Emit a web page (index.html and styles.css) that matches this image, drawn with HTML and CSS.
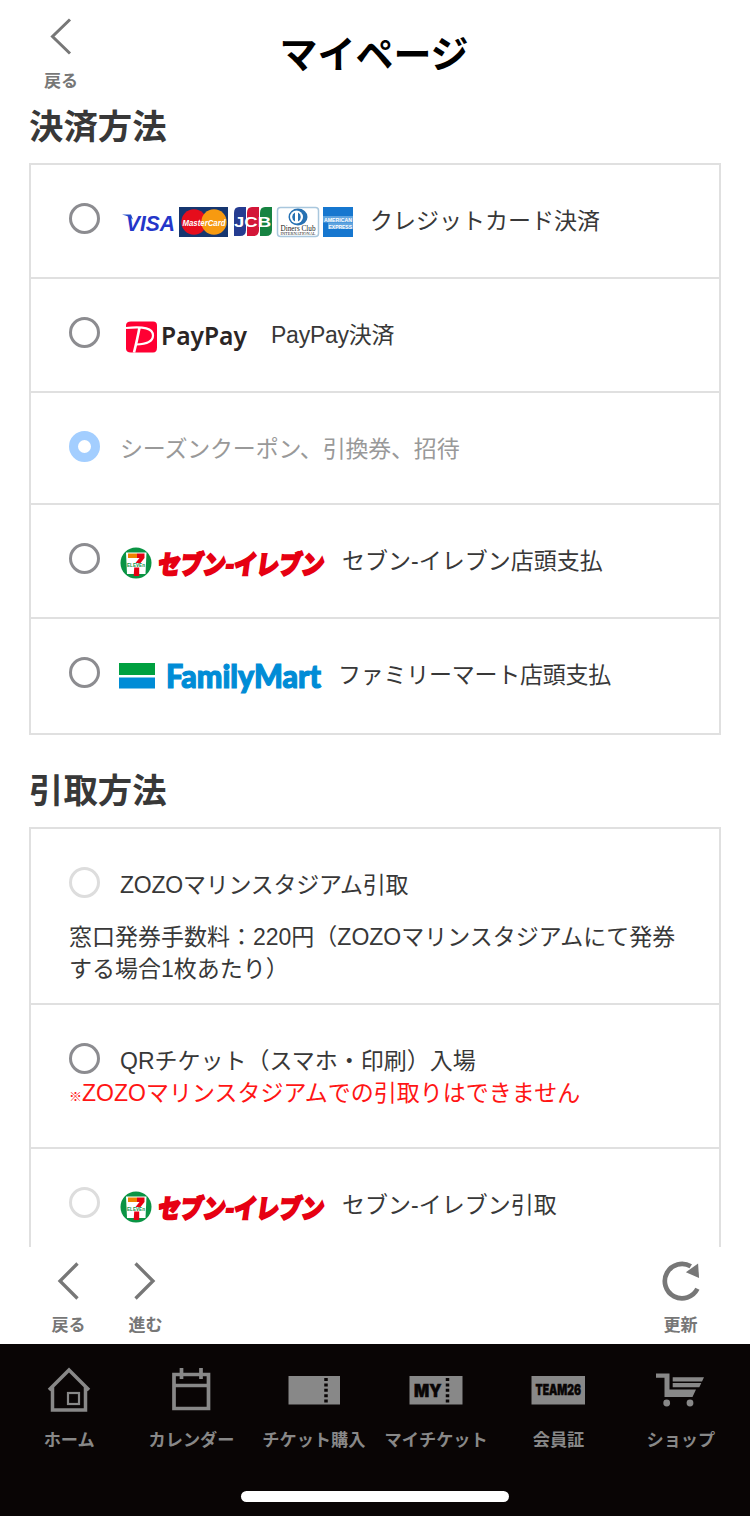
FILE: index.html
```html
<!DOCTYPE html>
<html lang="ja">
<head>
    <meta charset="UTF-8">
    <meta name="viewport" content="width=device-width, initial-scale=1.0">
    <title>マイページ</title>
    <link rel="stylesheet" href="styles.css">
</head>
<body>
    <div class="container">
        <header class="header">
            <a class="header-back">
                <svg width="24" height="40" viewBox="0 0 24 40"><path d="M21 3.500L3.500 20.500L21 37.500" fill="none" stroke="#777" stroke-width="3"/></svg>
                <span>戻る</span>
            </a>
            <h1>マイページ</h1>
        </header>

        <main class="content">
            <h2>決済方法</h2>
            <ul class="list payment">
                <li class="option">
                    <span class="radio"></span>
                    <svg class="logo" width="235" height="34" viewBox="0 0 235 34">
                        <text x="6" y="25.500" class="visa" textLength="49" lengthAdjust="spacingAndGlyphs">VISA</text>
                        <path d="M2 9.500h9l2 5q-4-3.500-11-5z" fill="#1f49c8"/>
                        <rect x="59" y="2" width="49" height="30" fill="#16366f"/>
                        <circle cx="74" cy="17" r="12.700" fill="#e60d1c"/>
                        <circle cx="94" cy="17" r="12.700" fill="#f79a10"/>
                        <text x="62.500" y="20.500" class="mastercard" textLength="43" lengthAdjust="spacingAndGlyphs">MasterCard</text>
                        <path d="M119 2h7v23q0 6-6 6h-6v-23q0-6 5-6z" fill="#253c91"/>
                        <path d="M132 2h7v23q0 6-6 6h-6v-23q0-6 5-6z" fill="#d31638"/>
                        <path d="M145 2h7v23q0 6-6 6h-6v-23q0-6 5-6z" fill="#168341"/>
                        <text x="114" y="22" class="jcb" textLength="37" lengthAdjust="spacingAndGlyphs">JCB</text>
                        <rect x="157.500" y="2.500" width="41" height="29" rx="3" fill="#fff" stroke="#a9c7dd" stroke-width="1.500"/>
                        <ellipse cx="178" cy="12" rx="9.500" ry="8.500" fill="#2671b3"/>
                        <circle cx="176.500" cy="12" r="6.500" fill="#fff"/>
                        <path d="M175 7.500a5 5 0 0 0 0 9zM178 7.500a5 5 0 0 1 0 9z" fill="#2671b3"/>
                        <text x="160.500" y="25.500" class="diners" textLength="35" lengthAdjust="spacingAndGlyphs">Diners Club</text>
                        <text x="160.500" y="29.500" class="diners-small" textLength="35" lengthAdjust="spacingAndGlyphs">INTERNATIONAL</text>
                        <rect x="203" y="2" width="30" height="30" fill="#1677cf"/>
                        <rect x="203" y="11" width="30" height="6.500" fill="#5fa4df"/>
                        <rect x="208" y="17.500" width="25" height="6.500" fill="#5fa4df"/>
                        <text x="204" y="17" class="amex" textLength="28" lengthAdjust="spacingAndGlyphs">AMERICAN</text>
                        <text x="208.500" y="23.500" class="amex" textLength="23.500" lengthAdjust="spacingAndGlyphs">EXPRESS</text>
                    </svg>
                    <span class="label">クレジットカード決済</span>
                </li>
                <li class="option">
                    <span class="radio"></span>
                    <svg class="logo paypay-logo" width="134" height="36" viewBox="0 0 134 36">
                        <path d="M11 2.500h22q4 0 4 4v22q0 5-4 5h-22q-5 0-5-4v-23q0-4 5-4z" fill="#ff0033"/>
                        <path d="M6 9q27-3 27 7.500q0 8.500-17 9" fill="none" stroke="#fff" stroke-width="2.200"/>
                        <path d="M19.500 8.500q-2 11-5.500 25" fill="none" stroke="#fff" stroke-width="2.600"/>
                        <text x="41" y="26" class="paypay" textLength="86" lengthAdjust="spacingAndGlyphs">PayPay</text>
                    </svg>
                    <span class="label narrow">PayPay決済</span>
                </li>
                <li class="option coupon">
                    <span class="radio checked"></span>
                    <span class="label">シーズンクーポン、引換券、招待</span>
                </li>
                <li class="option">
                    <span class="radio"></span>
                    <svg class="logo seven" width="207" height="36" viewBox="0 0 207 36">
                        <circle cx="16" cy="18" r="15.500" fill="#0a9444"/>
                        <path d="M6 7.500h20.500l-1 21.500h-18.500z" fill="#fff"/>
                        <path d="M8 8.500h9v4.500h-9z" fill="#f08300"/>
                        <path d="M17 8.500h7.500v4.500l-4 5h-5l4-5h-2.500z" fill="#e60012"/>
                        <path d="M14.200 22.500h5v8.500h-5.500z" fill="#e60012"/>
                        <text x="7" y="21.800" class="seven-mini" textLength="18" lengthAdjust="spacingAndGlyphs">ELEVEn</text>
                        <text class="seven-text" transform="translate(37 29) skewX(-8)" textLength="166" lengthAdjust="spacingAndGlyphs">セブン-イレブン</text>
                    </svg>
                    <span class="label">セブン-イレブン店頭支払</span>
                </li>
                <li class="option">
                    <span class="radio"></span>
                    <svg class="logo familymart" width="205" height="36" viewBox="0 0 205 36">
                        <rect x="0" y="4" width="36" height="12" fill="#00a040"/>
                        <rect x="0" y="18.500" width="36" height="11" fill="#008cd6"/>
                        <text x="47" y="29" class="family" textLength="155" lengthAdjust="spacingAndGlyphs">FamilyMart</text>
                    </svg>
                    <span class="label narrow">ファミリーマート店頭支払</span>
                </li>
            </ul>

            <h2>引取方法</h2>
            <ul class="list pickup">
                <li class="option stadium">
                    <span class="radio disabled"></span>
                    <span class="label narrow">ZOZOマリンスタジアム引取</span>
                    <p class="note">窓口発券手数料：220円（ZOZOマリンスタジアムにて発券<br>する場合1枚あたり）</p>
                </li>
                <li class="option qr">
                    <span class="radio"></span>
                    <span class="label">QRチケット（スマホ・印刷）入場</span>
                    <p class="note warning"><span class="mark">※</span>ZOZOマリンスタジアムでの引取りはできません</p>
                </li>
                <li class="option">
                    <span class="radio disabled"></span>
                    <svg class="logo seven" width="207" height="36" viewBox="0 0 207 36">
                        <circle cx="16" cy="18" r="15.500" fill="#0a9444"/>
                        <path d="M6 7.500h20.500l-1 21.500h-18.500z" fill="#fff"/>
                        <path d="M8 8.500h9v4.500h-9z" fill="#f08300"/>
                        <path d="M17 8.500h7.500v4.500l-4 5h-5l4-5h-2.500z" fill="#e60012"/>
                        <path d="M14.200 22.500h5v8.500h-5.500z" fill="#e60012"/>
                        <text x="7" y="21.800" class="seven-mini" textLength="18" lengthAdjust="spacingAndGlyphs">ELEVEn</text>
                        <text class="seven-text" transform="translate(37 29) skewX(-8)" textLength="166" lengthAdjust="spacingAndGlyphs">セブン-イレブン</text>
                    </svg>
                    <span class="label">セブン-イレブン引取</span>
                </li>
            </ul>
        </main>

        <div class="toolbar">
            <a class="tool">
                <svg width="24" height="40" viewBox="0 0 24 40"><path d="M20.500 3L3 20.500L20.500 38" fill="none" stroke="#777" stroke-width="3.300"/></svg>
                <span>戻る</span>
            </a>
            <a class="tool">
                <svg width="24" height="40" viewBox="0 0 24 40"><path d="M1.500 3L19 20.500L1.500 38" fill="none" stroke="#777" stroke-width="3.300"/></svg>
                <span>進む</span>
            </a>
            <a class="tool reload">
                <svg width="42" height="42" viewBox="0 0 42 42">
                    <path d="M31 6.500A17.600 17.600 0 1 0 37.800 29.500" fill="none" stroke="#777" stroke-width="4.800"/>
                    <path d="M26 12.500L38.500 3.500L39.500 18.500z" fill="#777"/>
                </svg>
                <span>更新</span>
            </a>
        </div>

        <nav class="nav">
            <a class="nav-item">
                <svg width="54" height="48" viewBox="0 0 54 48">
                    <path d="M7 24L27 4L47 24M10.500 21V44H43.500V21" fill="none" stroke="#888" stroke-width="3.500"/>
                    <rect x="26" y="27" width="11" height="11" fill="none" stroke="#888" stroke-width="2.200"/>
                </svg>
                <span>ホーム</span>
            </a>
            <a class="nav-item">
                <svg width="54" height="48" viewBox="0 0 54 48">
                    <path d="M10 8.500H44.500V42.500H10zM10 19.500H44.500" fill="none" stroke="#888" stroke-width="3.700"/>
                    <path d="M17.500 2V13M37 2V13" stroke="#888" stroke-width="3.700"/>
                </svg>
                <span>カレンダー</span>
            </a>
            <a class="nav-item">
                <svg width="54" height="48" viewBox="0 0 54 48">
                    <rect x="1.500" y="10" width="51.500" height="28.500" fill="#888"/>
                    <path d="M39 12V37" stroke="#090505" stroke-width="3.500" stroke-dasharray="3 2.400"/>
                </svg>
                <span>チケット購入</span>
            </a>
            <a class="nav-item">
                <svg width="54" height="48" viewBox="0 0 54 48">
                    <rect x="0.500" y="10" width="53" height="28.500" fill="#888"/>
                    <text x="5" y="30.500" class="my" textLength="27.500" lengthAdjust="spacingAndGlyphs">MY</text>
                    <path d="M38.500 12V37" stroke="#090505" stroke-width="3.500" stroke-dasharray="3 2.400"/>
                </svg>
                <span>マイチケット</span>
            </a>
            <a class="nav-item">
                <svg width="54" height="48" viewBox="0 0 54 48">
                    <rect x="0.500" y="10" width="53.500" height="28.500" fill="#888"/>
                    <text x="4.500" y="29.300" class="team" textLength="45.500" lengthAdjust="spacingAndGlyphs">TEAM26</text>
                </svg>
                <span>会員証</span>
            </a>
            <a class="nav-item">
                <svg width="54" height="48" viewBox="0 0 54 48">
                    <path d="M2 7.500H15.500V23.500H42L38.500 31H10.500V11.800H2z" fill="#888"/>
                    <path d="M18.700 11.200H50L48 15.500H18.700zM18.700 17H47.300L45.300 21.200H18.700z" fill="#888"/>
                    <circle cx="12.700" cy="37" r="3.400" fill="#888"/>
                    <circle cx="36" cy="37" r="3.400" fill="#888"/>
                </svg>
                <span>ショップ</span>
            </a>
            <div class="home-bar"></div>
        </nav>
    </div>
</body>
</html>
```
FILE: styles.css
```css
* {
    box-sizing: border-box;
}

body {
    margin: 0;
    font-family: "Liberation Sans", "Noto Sans CJK JP", sans-serif;
    background-color: #fff;
    color: #383838;
}

.container {
    display: flex;
    flex-direction: column;
    width: 750px;
    height: 1516px;
    overflow: hidden;
}

.header {
    display: grid;
    grid-template-columns: 122px 1fr 124px;
    height: 98px;
    flex: none;
}

.header-back {
    display: flex;
    flex-direction: column;
    align-items: center;
    padding-top: 16px;
    font-size: 17px;
    font-weight: bold;
    line-height: 24px;
    color: #777;
}

.header-back svg {
    flex: none;
}

.header-back span {
    margin-top: 14px;
}

h1 {
    margin: 0;
    padding-top: 25px;
    text-align: center;
    font-family: "Noto Sans CJK JP", sans-serif;
    font-size: 38px;
    line-height: 54px;
    color: #000;
}

.content {
    height: 1149px;
    flex: none;
    overflow: hidden;
    padding: 0 29px;
}

h2 {
    margin: 0;
    height: 65px;
    font-family: "Noto Sans CJK JP", sans-serif;
    font-size: 34.400px;
    font-weight: bold;
    line-height: 52px;
}

.list {
    list-style: none;
    margin: 0;
    padding: 0;
    border: 2px solid #e0e0e0;
}

.payment {
    margin-bottom: 27px;
}

.option {
    display: flex;
    flex-wrap: wrap;
    align-items: flex-start;
    align-content: flex-start;
    height: 114px;
    padding: 38px 30px 0 38px;
    border-bottom: 2px solid #e0e0e0;
    font-size: 23px;
    line-height: 32px;
}

.option:last-child {
    border-bottom: none;
}

.coupon {
    height: 112px;
    color: #999;
}

.coupon .label {
    letter-spacing: -0.200px;
}

.radio {
    width: 31px;
    height: 31px;
    margin-right: 20px;
    border: 3px solid #8c8c90;
    border-radius: 50%;
}

.radio.disabled {
    border-color: #ddd;
}

.radio.checked {
    border: 9px solid #a3ceff;
}

.logo {
    margin: 2px 15px 0 0;
    overflow: visible;
}

.paypay-logo {
    margin-right: 17px;
}

.familymart {
    margin-left: -1px;
    margin-right: 14px;
}

.label {
    margin-top: 2px;
}

.narrow {
    letter-spacing: -0.250px;
}

.note {
    width: 100%;
    margin: 0;
    line-height: 31.500px;
    white-space: nowrap;
}

.stadium {
    height: 176px;
}

.stadium .note {
    margin-top: 21px;
}

.qr {
    height: 144px;
}

.warning {
    margin-top: 1px;
    color: #ff1515;
}

.mark {
    font-size: 13px;
    font-weight: bold;
}

.toolbar {
    display: flex;
    height: 97px;
    flex: none;
    padding: 13px 31px 0 30px;
}

.tool {
    display: flex;
    flex-direction: column;
    align-items: center;
    width: 77px;
    font-size: 17px;
    font-weight: bold;
    line-height: 24px;
    color: #777;
}

.tool svg {
    height: 41px;
}

.tool span {
    margin-top: 13px;
}

.reload {
    margin-left: auto;
}

.nav {
    display: grid;
    grid-template-columns: repeat(6, 1fr);
    grid-template-rows: 147px 10px;
    height: 172px;
    flex: none;
    padding: 0 8px;
    background-color: #090505;
}

.nav-item {
    display: flex;
    flex-direction: column;
    align-items: center;
    padding-top: 22px;
    font-size: 17.200px;
    font-weight: bold;
    line-height: 24px;
    white-space: nowrap;
    color: #888;
}

.nav-item span {
    margin-top: 14px;
}

.home-bar {
    grid-column: 1 / -1;
    justify-self: center;
    width: 268px;
    height: 11px;
    border-radius: 6px;
    background-color: #fff;
}

/* logo lettering */
.visa {
    font: italic bold 22px "Liberation Sans", sans-serif;
    fill: #2436c9;
}

.mastercard {
    font: italic bold 9px "Liberation Sans", sans-serif;
    fill: #fff;
}

.jcb {
    font: bold 15px "Liberation Sans", sans-serif;
    fill: #fff;
}

.diners {
    font: 7.500px "Liberation Serif", serif;
    fill: #222;
}

.diners-small {
    font: 4px "Liberation Serif", serif;
    fill: #222;
}

.amex {
    font: bold 6px "Liberation Sans", sans-serif;
    fill: #fff;
}

.paypay {
    font: 600 25px "Noto Sans", sans-serif;
    fill: #2b2525;
}

.seven-mini {
    font: bold 5px "Liberation Sans", sans-serif;
    fill: #0a9444;
}

.seven-text {
    font: 900 26px "Noto Sans CJK JP", sans-serif;
    fill: #e60012;
    stroke: #e60012;
    stroke-width: 2px;
}

.family {
    font: 900 32px "Lato", sans-serif;
    fill: #008cd6;
    stroke: #008cd6;
    stroke-width: 1.200px;
}

.my {
    font: 900 17px "Inter", sans-serif;
    fill: #090505;
    stroke: #090505;
    stroke-width: 0.500px;
}

.team {
    font: 900 14px "Inter", sans-serif;
    fill: #090505;
    stroke: #090505;
    stroke-width: 0.500px;
}
```
